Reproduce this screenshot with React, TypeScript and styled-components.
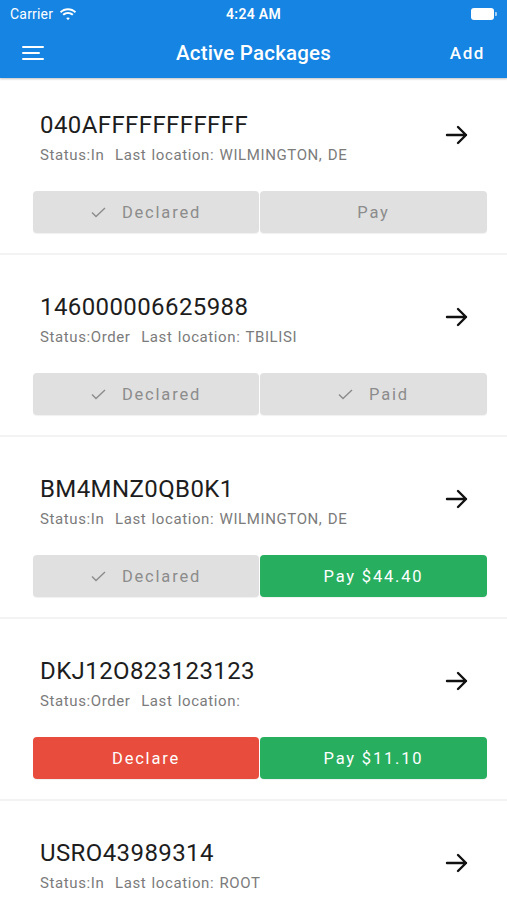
import styled, { createGlobalStyle } from "styled-components";

const GlobalStyle = createGlobalStyle`
  html, body {
    margin: 0;
    padding: 0;
    background: #ffffff;
    overflow: hidden;
  }
  body {
    font-family: Roboto, "Liberation Sans", sans-serif;
  }
`;

const Screen = styled.div`
  width: 507px;
  height: 900px;
  overflow: hidden;
  display: flex;
  flex-direction: column;
`;

const Header = styled.div`
  background: #1584e2;
  color: #ffffff;
  box-shadow: 0 1px 2px rgba(0, 0, 0, 0.25);
  position: relative;
  z-index: 1;
`;

const StatusBar = styled.div`
  height: 28px;
  display: grid;
  grid-template-columns: 1fr auto 1fr;
  align-items: center;
  padding: 0 10px;
  font-size: 14px;
`;

const Carrier = styled.div`
  display: flex;
  align-items: center;
  gap: 6px;
  letter-spacing: 0.2px;
`;

const Clock = styled.div`
  font-weight: 600;
  letter-spacing: 0.3px;
`;

const Battery = styled.div`
  justify-self: end;
  display: flex;
  align-items: center;
  gap: 1px;
`;

const BatteryBody = styled.div`
  width: 21px;
  height: 10px;
  border-radius: 3px;
  background: #ffffff;
  border: 1px solid rgba(255, 255, 255, 0.6);
`;

const BatteryTip = styled.div`
  width: 2px;
  height: 4px;
  border-radius: 0 1px 1px 0;
  background: rgba(255, 255, 255, 0.6);
`;

const NavBar = styled.div`
  height: 50px;
  display: grid;
  grid-template-columns: 80px 1fr 80px;
  align-items: center;
  padding: 0 22px;
`;

const Burger = styled.div`
  display: flex;
  flex-direction: column;
  gap: 4px;
`;

const BurgerLine = styled.div<{ $w: number }>`
  width: ${(p) => p.$w}px;
  height: 2px;
  border-radius: 1px;
  background: #ffffff;
`;

const NavTitle = styled.div`
  text-align: center;
  font-size: 20.5px;
  font-weight: 500;
  letter-spacing: 0.2px;
`;

const NavAction = styled.div`
  text-align: right;
  font-size: 17px;
  font-weight: 500;
  letter-spacing: 1.6px;
`;

const List = styled.div`
  flex: 1;
  overflow: hidden;
  background: #f3f3f3;
`;

const Card = styled.div`
  background: #ffffff;
  padding: 34px 20px 20px 33px;
  margin-bottom: 2px;
  &:first-child {
    padding-top: 29px;
  }
`;

const Top = styled.div`
  display: flex;
  justify-content: space-between;
  padding-left: 7px;
  padding-right: 18px;
`;

const Info = styled.div`
  display: flex;
  flex-direction: column;
`;

const Code = styled.div`
  font-size: 24px;
  line-height: 36px;
  color: #1d1d1d;
  letter-spacing: 0.4px;
`;

const Meta = styled.div`
  font-size: 15px;
  line-height: 20px;
  margin-top: 2px;
  color: #7b7b7b;
  letter-spacing: 0.6px;
  word-spacing: 1px;
`;

const Arrow = styled.div`
  padding-top: 18px;
`;

const Buttons = styled.div`
  display: grid;
  grid-template-columns: 226px 227px;
  gap: 1px;
  margin-top: 26px;
`;

type Tone = "gray" | "green" | "red";

const toneBg: Record<Tone, string> = {
  gray: "#e0e0e0",
  green: "#27ae5f",
  red: "#e74c3c",
};

const Button = styled.div<{ $tone: Tone }>`
  height: 42px;
  border-radius: 4px;
  background: ${(p) => toneBg[p.$tone]};
  color: ${(p) => (p.$tone === "gray" ? "#8c8c8c" : "#ffffff")};
  display: flex;
  align-items: center;
  justify-content: center;
  gap: 16px;
  font-size: 16.5px;
  font-weight: 400;
  letter-spacing: 1.8px;
  box-shadow: 0 1px 1px rgba(0, 0, 0, 0.06);
`;

const Check = () => (
  <svg width="15" height="11" viewBox="0 0 15 11" fill="none">
    <path d="M1 5.5 L5 9.5 L14 1" stroke="#8c8c8c" strokeWidth="1.4" />
  </svg>
);

const ArrowIcon = () => (
  <svg width="24" height="20" viewBox="0 0 24 20" fill="none">
    <path
      d="M2 10 H21 M13 2 L21 10 L13 18"
      stroke="#111"
      strokeWidth="2.4"
      strokeLinecap="round"
      strokeLinejoin="round"
    />
  </svg>
);

const Wifi = () => (
  <svg width="18" height="13" viewBox="0 0 18 13" fill="#fff">
    <path d="M9 2.2c2.6 0 5 1 6.8 2.7l1.3-1.4C14.9 1.4 12.1.2 9 .2S3.1 1.4.9 3.5l1.3 1.4C4 3.2 6.4 2.2 9 2.2z" />
    <path d="M9 5.9c1.6 0 3 .6 4.2 1.6l1.3-1.4C13 4.7 11.1 3.9 9 3.9s-4 .8-5.5 2.200l1.3 1.4C6 6.5 7.4 5.9 9 5.9z" />
    <path d="M9 9.4c.7 0 1.3.2 1.8.6L9 12.3 7.2 10c.5-.4 1.1-.6 1.8-.6z" />
  </svg>
);

type Pkg = {
  code: string;
  status: string;
  location: string;
  declared: boolean;
  pay: { label: string; tone: Tone; check?: boolean };
};

const packages: Pkg[] = [
  {
    code: "040AFFFFFFFFFFF",
    status: "In",
    location: "WILMINGTON, DE",
    declared: true,
    pay: { label: "Pay", tone: "gray" },
  },
  {
    code: "146000006625988",
    status: "Order",
    location: "TBILISI",
    declared: true,
    pay: { label: "Paid", tone: "gray", check: true },
  },
  {
    code: "BM4MNZ0QB0K1",
    status: "In",
    location: "WILMINGTON, DE",
    declared: true,
    pay: { label: "Pay $44.40", tone: "green" },
  },
  {
    code: "DKJ12O823123123",
    status: "Order",
    location: "",
    declared: false,
    pay: { label: "Pay $11.10", tone: "green" },
  },
  {
    code: "USRO43989314",
    status: "In",
    location: "ROOT",
    declared: false,
    pay: { label: "Pay", tone: "gray" },
  },
];

export default function App() {
  return (
    <Screen>
      <GlobalStyle />
      <Header>
        <StatusBar>
          <Carrier>
            Carrier <Wifi />
          </Carrier>
          <Clock>4:24 AM</Clock>
          <Battery>
            <BatteryBody />
            <BatteryTip />
          </Battery>
        </StatusBar>
        <NavBar>
          <Burger>
            <BurgerLine $w={22} />
            <BurgerLine $w={18} />
            <BurgerLine $w={22} />
          </Burger>
          <NavTitle>Active Packages</NavTitle>
          <NavAction>Add</NavAction>
        </NavBar>
      </Header>
      <List>
        {packages.map((p) => (
          <Card key={p.code}>
            <Top>
              <Info>
                <Code>{p.code}</Code>
                <Meta>
                  Status:{p.status}&nbsp; Last location: {p.location}
                </Meta>
              </Info>
              <Arrow>
                <ArrowIcon />
              </Arrow>
            </Top>
            <Buttons>
              {p.declared ? (
                <Button $tone="gray">
                  <Check />
                  Declared
                </Button>
              ) : (
                <Button $tone="red">Declare</Button>
              )}
              <Button $tone={p.pay.tone}>
                {p.pay.check && <Check />}
                {p.pay.label}
              </Button>
            </Buttons>
          </Card>
        ))}
      </List>
    </Screen>
  );
}
